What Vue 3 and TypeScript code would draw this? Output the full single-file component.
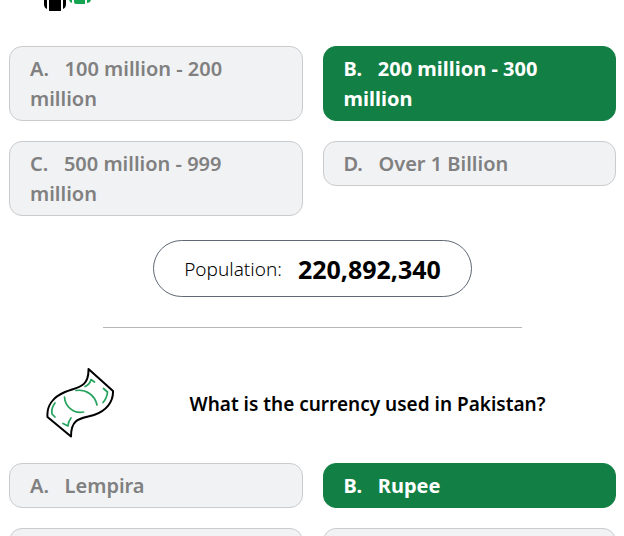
<script setup lang="ts">
interface Option {
  text: string
  correct?: boolean
}

const population: Option[] = [
  { text: '100 million - 200 million' },
  { text: '200 million - 300 million', correct: true },
  { text: '500 million - 999 million' },
  { text: 'Over 1 Billion' },
]

const currency: Option[] = [
  { text: 'Lempira' },
  { text: 'Rupee', correct: true },
]

const label = (option: Option, index: number): string =>
  `${'ABCD'[index]}.\u00a0\u00a0 ${option.text}`
</script>

<template>
  <main class="quiz">
    <section>
      <header class="people">
        <svg width="50" height="12" viewBox="0 0 50 12" aria-hidden="true">
          <path d="M1 0H4V9Q1 8 1 4ZM6 0H18V11H6ZM20 0H23V4Q23 8 20 9Z" fill="#000" />
          <path d="M26 0H29V3Q27 3 26 0ZM31 0H42V4H33Q31 4 31 2ZM44 0H48Q47 3 44 3Z" fill="#17a452" />
        </svg>
      </header>
      <div class="options">
        <button
          v-for="(option, i) in population"
          :key="i"
          type="button"
          class="option"
          :class="{ correct: option.correct }"
        >{{ label(option, i) }}</button>
      </div>
      <p class="fact"><span>Population:</span><strong>220,892,340</strong></p>
    </section>

    <hr class="divider" />

    <section>
      <header class="question">
        <svg class="note" width="70" height="72" viewBox="0 0 70 72" fill="none" stroke-linecap="round" stroke-linejoin="round" aria-hidden="true">
          <path d="M43.500 1L68 23C68.500 34 61 43 49 47C37 51 26 49 26 68.500L2.500 49C1.500 38 8 29 20 24C32 19 44 20 43.500 1Z" stroke="#000" stroke-width="2" />
          <g stroke="#25a35d" stroke-width="1.700">
            <path d="M31 22.500C41 21 50 27 52 37" />
            <path d="M19.500 29C20 38 28 46 38.500 44" />
            <path d="M40 18.500Q45 16.500 46 11.500L49.500 14" />
            <path d="M58.500 20.500L62.500 24Q62 30 58 34.500" />
            <path d="M10 35Q6 40 7 46L10 49" />
            <path d="M26 50Q23 54 23 58L18 55.500" />
          </g>
        </svg>
        <h2>What is the currency used in Pakistan?</h2>
      </header>
      <div class="options">
        <button
          v-for="(option, i) in currency"
          :key="i"
          type="button"
          class="option"
          :class="{ correct: option.correct }"
        >{{ label(option, i) }}</button>
        <button type="button" class="option" aria-label="C"></button>
        <button type="button" class="option" aria-label="D"></button>
      </div>
    </section>
  </main>
</template>

<style>
body {
  margin: 0;
  background: #fff;
}
</style>

<style scoped>
.quiz {
  box-sizing: border-box;
  height: 100vh;
  overflow: hidden;
  padding: 0 8px 0 9px;
  font-family: "Segoe UI", "Noto Sans", "Open Sans", sans-serif;
  font-size: 19px;
  line-height: 30px;
  color: #000;
}
.people {
  height: 46px;
  padding-left: 34px;
}
.people svg {
  display: block;
}
.options {
  display: grid;
  grid-template-columns: 1fr 1fr;
  gap: 20px;
  align-items: start;
}
.option {
  min-height: 45px;
  margin: 0;
  padding: 7px 56px 6px 20px;
  border: 1px solid #cacbcd;
  border-radius: 13px;
  background: #f1f2f4;
  color: #808080;
  font: inherit;
  font-size: 20px;
  font-weight: 600;
  text-align: left;
  cursor: pointer;
}
.option.correct {
  border-color: #128044;
  background: #128044;
  color: #fff;
  font-weight: 700;
}
.fact {
  display: flex;
  align-items: center;
  justify-content: center;
  gap: 16px;
  width: fit-content;
  margin: 24px auto 0;
  padding: 13px 30px 12px;
  border: 1px solid #5f6875;
  border-radius: 29px;
  font-weight: 300;
}
.fact strong {
  font-size: 25px;
  font-weight: 700;
}
.divider {
  width: 69%;
  margin: 30px auto 0;
  border: 0;
  border-top: 1px solid #b4b6b8;
}
.question {
  display: flex;
  align-items: center;
  padding: 40px 36px 23px;
}
.note {
  flex: none;
}
.question h2 {
  flex: 1;
  margin: 0;
  padding-left: 40px;
  font-size: 19px;
  font-weight: 600;
  line-height: 30px;
  text-align: center;
  white-space: nowrap;
}
</style>
